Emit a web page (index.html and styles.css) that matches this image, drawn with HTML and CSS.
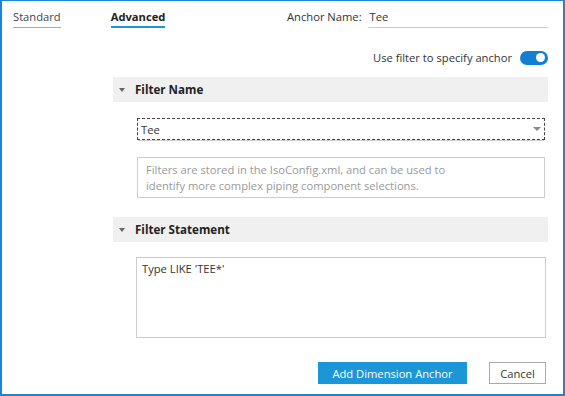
FILE: index.html
```html
<!DOCTYPE html>
<html lang="en">
<head>
  <meta charset="UTF-8" />
  <title>Dimension Anchor</title>
  <link rel="stylesheet" href="styles.css">
</head>
<body>
  <div id="window">
    <div class="top-row">
      <div class="tabs">
        <span class="tab">Standard</span>
        <span class="tab active">Advanced</span>
      </div>
      <div class="anchor-name">
        <label>Anchor Name:</label>
        <div class="line-input">Tee</div>
      </div>
    </div>

    <div class="toggle-row">
      <span>Use filter to specify anchor</span>
      <span class="toggle"><span class="knob"></span></span>
    </div>

    <div class="section">
      <div class="section-head"><span class="caret"></span>Filter Name</div>
      <div class="section-body">
        <div class="dropdown">
          <span>Tee</span>
          <span class="drop-caret"></span>
        </div>
        <div class="hint">
          Filters are stored in the IsoConfig.xml, and can be used to<br>
          identify more complex piping component selections.
        </div>
      </div>
    </div>

    <div class="section">
      <div class="section-head"><span class="caret"></span>Filter Statement</div>
      <div class="section-body">
        <div class="statement">Type LIKE 'TEE*'</div>
      </div>
    </div>

    <div class="actions">
      <button class="btn primary">Add Dimension Anchor</button>
      <button class="btn cancel">Cancel</button>
    </div>
  </div>
</body>
</html>
```

FILE: styles.css
```css
* {
  box-sizing: border-box;
  margin: 0;
  padding: 0;
}

html, body {
  width: 565px;
  height: 396px;
  background: #ffffff;
  font-family: 'Open Sans', 'Noto Sans', sans-serif;
  font-size: 11.2px;
  color: #333333;
  overflow: hidden;
}

#window {
  width: 565px;
  height: 396px;
  border: 2px solid #1b86d6;
  border-top-width: 1px;
  padding: 0 15px 0 11px;
  display: flex;
  flex-direction: column;
}

.top-row {
  display: flex;
  justify-content: space-between;
  padding-top: 8px;
}

.tabs {
  display: flex;
  gap: 50px;
}

.tab {
  line-height: 16px;
  padding-bottom: 1px;
  border-bottom: 1px solid #aaaaaa;
  color: #444444;
}

.tab.active {
  font-weight: bold;
  color: #222222;
  border-bottom: 2px solid #1b96d6;
}

.anchor-name {
  display: flex;
  gap: 6px;
  width: 261px;
}

.anchor-name label {
  line-height: 16px;
}

.line-input {
  flex: 1;
  line-height: 16px;
  padding-left: 2px;
  border-bottom: 1px solid #cccccc;
}

.toggle-row {
  display: flex;
  justify-content: flex-end;
  align-items: center;
  gap: 8px;
  margin-top: 22px;
}

.toggle {
  width: 28px;
  height: 14px;
  border-radius: 7px;
  background: #137fd2;
  display: flex;
  justify-content: flex-end;
  align-items: center;
  padding-right: 3px;
}

.knob {
  width: 9px;
  height: 9px;
  border-radius: 50%;
  background: #ffffff;
}

.section {
  margin-left: 100px;
  margin-top: 12px;
}

.section-head {
  background: #f0f0f0;
  height: 25px;
  display: flex;
  align-items: center;
  font-weight: bold;
  font-size: 11.6px;
  color: #222222;
  padding-left: 6px;
}

.caret {
  width: 0;
  height: 0;
  border-left: 3.5px solid transparent;
  border-right: 3.5px solid transparent;
  border-top: 4px solid #666666;
  margin-right: 10px;
}

.section-body {
  padding: 16px 3px 0 24px;
}

.dropdown {
  height: 22px;
  border: 1px dashed #444444;
  display: flex;
  justify-content: space-between;
  align-items: center;
  padding: 0 3px;
  box-shadow: 0 2px 0 -1px #cccccc;
}

.drop-caret {
  border-left: 4px solid transparent;
  border-right: 4px solid transparent;
  border-top: 4px solid #888888;
}

.hint {
  margin-top: 17px;
  border: 1px solid #cccccc;
  padding: 4px 8px;
  height: 41px;
  color: #999999;
  line-height: 16px;
}

.section + .section {
  margin-top: 19px;
}

.section + .section .section-body {
  padding-top: 15px;
}

.statement {
  margin-left: -1px;
  margin-right: -1px;
  height: 81px;
  border: 1px solid #cccccc;
  padding: 3px 5px;
  line-height: 16px;
}

.actions {
  display: flex;
  justify-content: flex-end;
  gap: 22px;
  margin-top: 24px;
  padding-right: 2px;
}

.btn {
  font-family: inherit;
  font-size: 11.2px;
  height: 22px;
  padding: 0 8px;
  border: 1px solid #aaaaaa;
  background: #ffffff;
  color: #333333;
}

.btn.cancel {
  width: 57px;
}

.btn.primary {
  width: 149px;
  background: #1b96d6;
  border-color: #1b96d6;
  color: #ffffff;
}
```
